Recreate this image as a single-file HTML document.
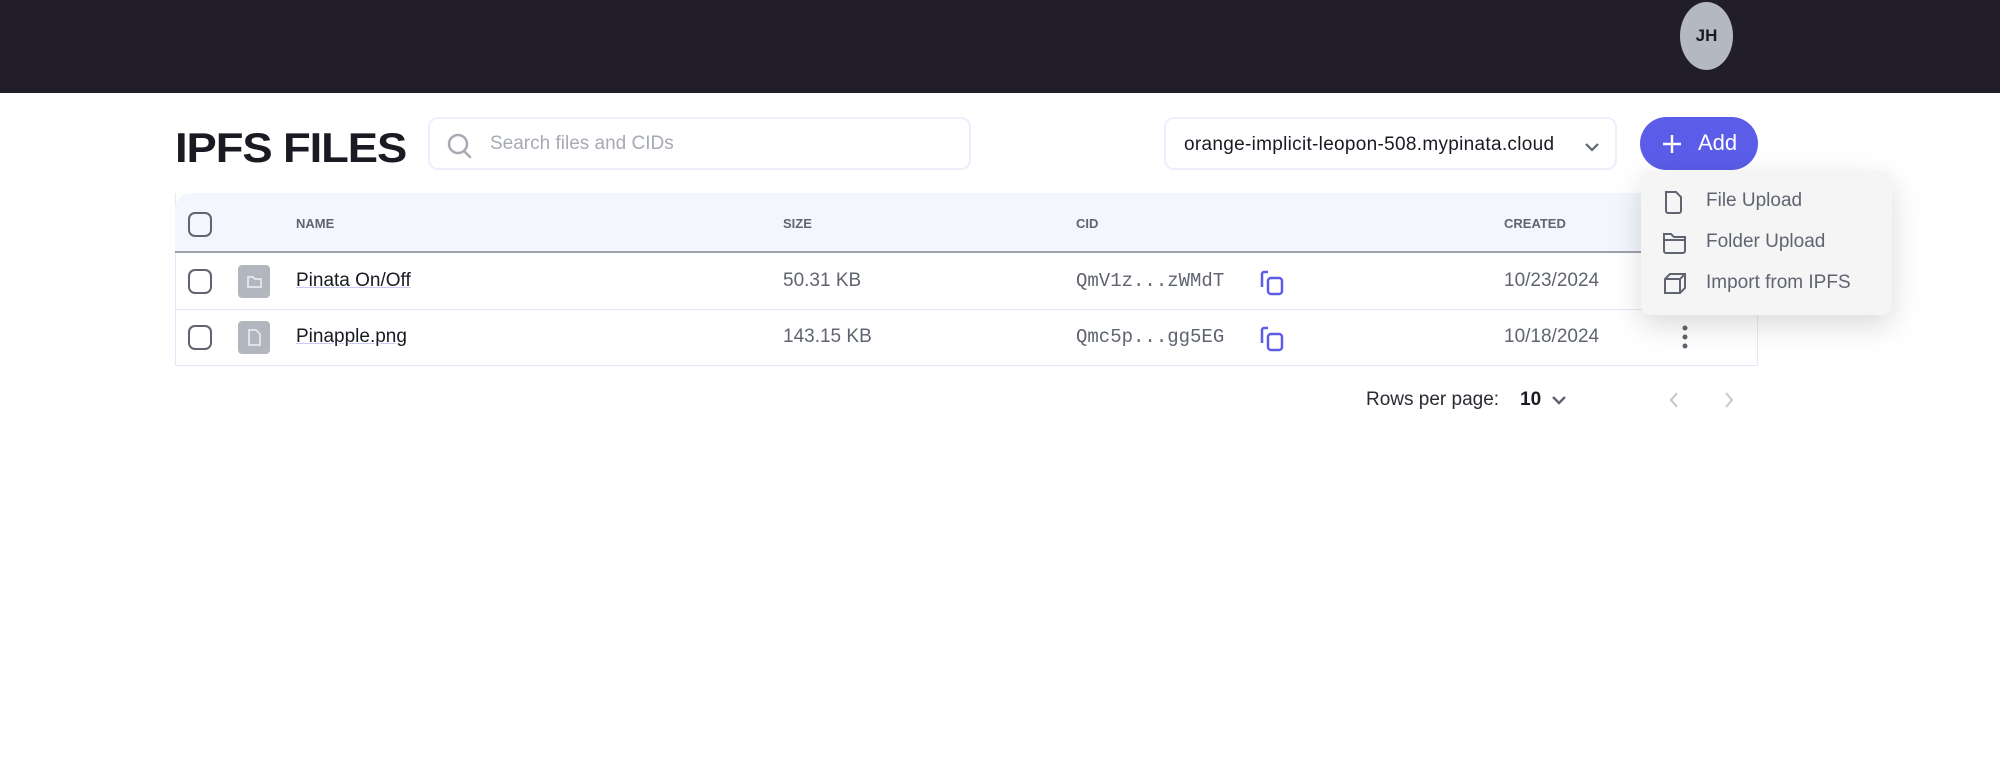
<!DOCTYPE html>
<html><head><meta charset="utf-8"><style>
*{box-sizing:border-box;margin:0;padding:0}
body{width:2000px;height:775px;background:#fff;font-family:"Liberation Sans",sans-serif;position:relative;overflow:hidden;color:#1a1a23}
.abs{position:absolute}
.hdr{left:0;top:0;width:2000px;height:93px;background:#211e2a}
.av{left:1680px;top:2px;width:53px;height:68px;border-radius:50%;background:#b4b8c0;color:#1a1a23;font-weight:bold;font-size:17px;display:flex;align-items:center;justify-content:center}
.title{left:175px;top:124px;font-size:42px;font-weight:900;letter-spacing:-1px;transform:scaleX(1.08);transform-origin:left}
.search{left:428px;top:117px;width:543px;height:53px;border:2px solid #eceefb;border-radius:10px}
.search span{position:absolute;left:60px;top:14px;font-size:19px;color:#a6aab3}
.sel{left:1164px;top:117px;width:453px;height:53px;border:2px solid #eceefb;border-radius:10px;font-size:19px;padding:15px 0 0 18px;letter-spacing:0.3px}
.add{left:1640px;top:117px;width:118px;height:53px;border-radius:27px;background:#5b5ce8;color:#fff;font-size:22px;padding:13px 0 0 58px}
.tbl{left:175px;top:193px;width:1583px;height:173px;border:1px solid #e6e8fa;border-top:none}
.th{left:175px;top:193px;width:1583px;height:60px;background:#f3f6fd;border-bottom:2px solid #9ea1aa;border-top-left-radius:16px}
.lbl{font-size:13px;font-weight:bold;color:#5f6470;top:216px}
.cb{width:24px;height:25px;border:2.5px solid #5f6470;border-radius:7px}
.ic{width:32px;height:33px;border-radius:4px;background:#b2b6be}
.rt{font-size:19px;top:270px}
.mono{font-family:"Liberation Mono",monospace;color:#5f6470;font-size:19px}
.gray{color:#5f6470}
.menu{left:1641px;top:171px;width:251px;height:144px;background:#f5f5f6;border-radius:10px;box-shadow:0 10px 30px rgba(0,0,0,.15)}
.mi{font-size:19px;color:#5f6470;left:1706px}
</style></head><body>
<div class="abs hdr"></div>
<div class="abs av">JH</div>
<div class="abs title">IPFS FILES</div>
<div class="abs search"><svg class="abs" style="left:16px;top:13px" width="28" height="28" viewBox="0 0 28 28"><circle cx="12" cy="12" r="9" fill="none" stroke="#a6aab3" stroke-width="2.5"/><path d="M18.5 19.5L24 25" stroke="#a6aab3" stroke-width="2.5" stroke-linecap="round"/></svg><span>Search files and CIDs</span></div>
<div class="abs sel">orange-implicit-leopon-508.mypinata.cloud<svg class="abs" style="left:418px;top:22px" width="16" height="12" viewBox="0 0 16 12"><path d="M2 3l6 6 6-6" fill="none" stroke="#5f6470" stroke-width="2.2"/></svg></div>
<div class="abs add"><svg class="abs" style="left:22px;top:17px" width="20" height="20" viewBox="0 0 20 20"><path d="M10 1v18M1 10h18" stroke="#fff" stroke-width="2.4"/></svg>Add</div>
<div class="abs tbl"></div>
<div class="abs th"></div>
<div class="abs" style="left:175px;top:309px;width:1583px;height:1px;background:#e6e8fa"></div>
<div class="abs cb" style="left:188px;top:212px"></div>
<div class="abs lbl" style="left:296px">NAME</div>
<div class="abs lbl" style="left:783px">SIZE</div>
<div class="abs lbl" style="left:1076px">CID</div>
<div class="abs lbl" style="left:1504px">CREATED</div>
<div class="abs cb" style="left:188px;top:269px"></div>
<div class="abs ic" style="left:238px;top:265px"><svg width="32" height="33" viewBox="0 0 32 33"><path d="M10 12h5l2 2h6v8h-13z" fill="none" stroke="#eef0f3" stroke-width="1.5"/></svg></div>
<div class="abs rt" style="left:296px;text-decoration:underline;text-decoration-color:#c8cbf5">Pinata On/Off</div>
<div class="abs rt gray" style="left:783px">50.31 KB</div>
<div class="abs rt mono" style="left:1076px">QmV1z...zWMdT</div>
<svg class="abs" style="left:1259px;top:268px" width="26" height="28" viewBox="0 0 26 28"><path d="M9 4H5a2 2 0 0 0-2 2v13" fill="none" stroke="#5b5ce8" stroke-width="2.5"/><rect x="9" y="10" width="14" height="16" rx="3" fill="none" stroke="#5b5ce8" stroke-width="2.5"/></svg>
<div class="abs rt gray" style="left:1504px">10/23/2024</div>
<div class="abs cb" style="left:188px;top:325px"></div>
<div class="abs ic" style="left:238px;top:321px"><svg width="32" height="33" viewBox="0 0 32 33"><path d="M11 9h7l4 4v11h-11z" fill="none" stroke="#eef0f3" stroke-width="1.5"/></svg></div>
<div class="abs rt" style="left:296px;top:326px;text-decoration:underline;text-decoration-color:#c8cbf5">Pinapple.png</div>
<div class="abs rt gray" style="left:783px;top:326px">143.15 KB</div>
<div class="abs rt mono" style="left:1076px;top:326px">Qmc5p...gg5EG</div>
<svg class="abs" style="left:1259px;top:324px" width="26" height="28" viewBox="0 0 26 28"><path d="M9 4H5a2 2 0 0 0-2 2v13" fill="none" stroke="#5b5ce8" stroke-width="2.5"/><rect x="9" y="10" width="14" height="16" rx="3" fill="none" stroke="#5b5ce8" stroke-width="2.5"/></svg>
<div class="abs rt gray" style="left:1504px;top:326px">10/18/2024</div>
<svg class="abs" style="left:1680px;top:325px" width="10" height="24" viewBox="0 0 10 24"><circle cx="5" cy="3" r="2.5" fill="#5f6470"/><circle cx="5" cy="12" r="2.5" fill="#5f6470"/><circle cx="5" cy="21" r="2.5" fill="#5f6470"/></svg>
<div class="abs menu"></div>
<svg class="abs" style="left:1662px;top:189px" width="24" height="26" viewBox="0 0 24 26"><path d="M4 3h10l5 5v14a2 2 0 0 1-2 2H6a2 2 0 0 1-2-2z" fill="none" stroke="#5f6470" stroke-width="2"/></svg>
<div class="abs mi" style="top:190px">File Upload</div>
<svg class="abs" style="left:1662px;top:230px" width="26" height="26" viewBox="0 0 26 26"><path d="M2 4h7l3 3h11v14a2 2 0 0 1-2 2H4a2 2 0 0 1-2-2zM2 10h21" fill="none" stroke="#5f6470" stroke-width="2"/></svg>
<div class="abs mi" style="top:231px">Folder Upload</div>
<svg class="abs" style="left:1662px;top:271px" width="26" height="26" viewBox="0 0 26 26"><path d="M3 8l5-5h15v14l-5 5H3zM3 8h15v14M18 8l5-5" fill="none" stroke="#5f6470" stroke-width="2"/></svg>
<div class="abs mi" style="top:272px">Import from IPFS</div>
<div class="abs" style="left:1366px;top:389px;font-size:19px;color:#2a2a33">Rows per page:</div>
<div class="abs" style="left:1520px;top:389px;font-size:19px;font-weight:bold">10</div>
<svg class="abs" style="left:1551px;top:394px" width="16" height="12" viewBox="0 0 16 12"><path d="M2 3l6 6 6-6" fill="none" stroke="#5f6470" stroke-width="2.4"/></svg>
<svg class="abs" style="left:1668px;top:390px" width="12" height="20" viewBox="0 0 12 20"><path d="M9 3l-6 7 6 7" fill="none" stroke="#c5c8ce" stroke-width="2"/></svg>
<svg class="abs" style="left:1723px;top:390px" width="12" height="20" viewBox="0 0 12 20"><path d="M3 3l6 7-6 7" fill="none" stroke="#c5c8ce" stroke-width="2"/></svg>
</body></html>
